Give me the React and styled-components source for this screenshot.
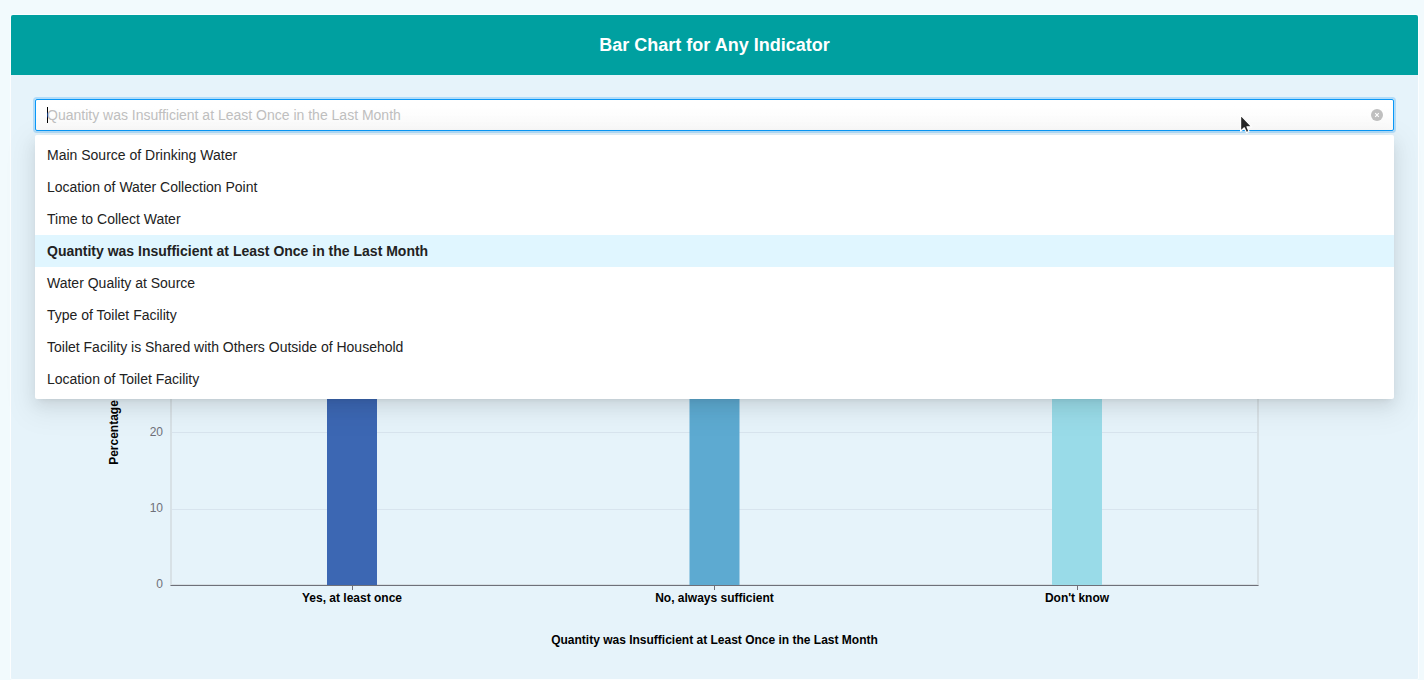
import React from 'react';
import styled, { createGlobalStyle } from 'styled-components';

const GlobalStyle = createGlobalStyle`
  * { box-sizing: border-box; }
  html, body { margin: 0; height: 100%; overflow: hidden; }
  body {
    background: #f2fafd;
    font-family: "Liberation Sans", Arial, sans-serif;
    font-size: 14px;
    color: #222;
  }
`;

const Page = styled.main`
  height: 680px;
  padding: 14px 5px 0 10px;
  overflow: hidden;
`;

const Card = styled.section`
  height: 666px;
  border: 1px solid #fcfeff;
  border-radius: 2px;
  background: #e6f3fa;
`;

const CardHeader = styled.header`
  display: flex;
  align-items: center;
  justify-content: center;
  height: 60px;
  border-radius: 2px 2px 0 0;
  background: #00a0a0;
`;

const Title = styled.h1`
  margin: 0;
  font-size: 18px;
  line-height: 28px;
  font-weight: 700;
  color: #fff;
`;

const CardBody = styled.div`
  padding: 24px;
`;

const SelectWrap = styled.div`
  position: relative;
`;

const SelectBox = styled.div`
  display: flex;
  align-items: center;
  height: 32px;
  padding: 0 10px 0 11px;
  border: 1px solid #0a98f7;
  border-radius: 2px;
  background: linear-gradient(#fff 20%, #fafafa);
  box-shadow: 0 0 0 2px rgba(10, 145, 245, 0.24);
`;

const Caret = styled.span`
  width: 1px;
  height: 16px;
  margin-right: -1px;
  background: #000;
`;

const Placeholder = styled.span`
  flex: 1;
  line-height: 30px;
  color: #bfbfbf;
`;

const ClearIcon = styled.svg`
  display: block;
  width: 12px;
  height: 12px;
`;

const Menu = styled.ul`
  position: absolute;
  z-index: 2;
  top: 36px;
  left: 0;
  right: 0;
  margin: 0;
  padding: 4px 0;
  list-style: none;
  border-radius: 2px;
  background: #fff;
  box-shadow: 0 3px 6px -4px rgba(0, 0, 0, 0.12),
    0 6px 16px 0 rgba(0, 0, 0, 0.08),
    0 9px 28px 8px rgba(0, 0, 0, 0.05);
`;

const Option = styled.li`
  height: 32px;
  padding: 5px 12px;
  line-height: 22px;
  font-weight: ${(p) => (p.$selected ? 700 : 400)};
  background: ${(p) => (p.$selected ? '#e0f6ff' : 'transparent')};
`;

const Pointer = styled.svg`
  position: absolute;
  z-index: 3;
  top: 15px;
  left: 1203px;
  width: 16px;
  height: 22px;
`;

const Chart = styled.svg`
  display: block;
  width: 1359px;
  height: 549px;
  font-family: "Liberation Sans", Arial, sans-serif;
  font-size: 12px;
`;

const AxisLabel = styled.text`
  font-weight: 700;
  text-anchor: middle;
  fill: #000;
`;

const TickLabel = styled.text`
  text-anchor: end;
  fill: #6e7079;
`;

const options = [
  'Main Source of Drinking Water',
  'Location of Water Collection Point',
  'Time to Collect Water',
  'Quantity was Insufficient at Least Once in the Last Month',
  'Water Quality at Source',
  'Type of Toilet Facility',
  'Toilet Facility is Shared with Others Outside of Household',
  'Location of Toilet Facility',
];
const selected = options[3];

const bars = [
  { label: 'Yes, at least once', x: 292, fill: '#3c67b3', value: 34 },
  { label: 'No, always sufficient', x: 654.5, fill: '#5daad1', value: 38 },
  { label: "Don't know", x: 1017, fill: '#99dbe8', value: 28 },
];
const BASE = 454;
const STEP = 76.3;

function BarChart() {
  return (
    <Chart viewBox="0 0 1359 549">
      {[10, 20, 30, 40].map((v) => {
        const y = Math.round(BASE - (v / 10) * STEP) + 0.5;
        return <path key={v} d={`M137 ${y}H1222`} stroke="#d8e4ee" />;
      })}
      <path d="M136 70V455M1223 70V455" stroke="#d6dfe4" strokeWidth="1.8" />
      <path d="M137 453.5H1222" stroke="#d6dfe4" />
      {bars.map((b) => {
        const height = (b.value / 10) * STEP;
        return <rect key={b.label} x={b.x} y={BASE - height} width="50" height={height} fill={b.fill} />;
      })}
      <path d="M135.5 454.5H1223.5" stroke="#6e7079" />
      {bars.map((b) => (
        <g key={b.label}>
          <path d={`M${Math.floor(b.x + 25) + 0.5} 455V459`} stroke="#6e7079" />
          <AxisLabel x={b.x + 25} y="471">{b.label}</AxisLabel>
        </g>
      ))}
      {[0, 10, 20].map((v) => (
        <TickLabel key={v} x="128" y={Math.ceil(BASE + 3 - (v / 10) * STEP)}>{v}</TickLabel>
      ))}
      <AxisLabel transform="translate(83 301.5) rotate(-90)">Percentage</AxisLabel>
      <AxisLabel x="679.5" y="513">{selected}</AxisLabel>
    </Chart>
  );
}

export default function App() {
  return (
    <Page>
      <GlobalStyle />
      <Card>
        <CardHeader>
          <Title>Bar Chart for Any Indicator</Title>
        </CardHeader>
        <CardBody>
          <SelectWrap>
            <SelectBox>
              <Caret />
              <Placeholder>{selected}</Placeholder>
              <ClearIcon viewBox="0 0 12 12">
                <circle cx="6" cy="6" r="6" fill="#bfbfbf" />
                <path d="M4.2 4.2L7.8 7.8M7.8 4.2L4.2 7.8" stroke="#fff" strokeWidth="1.1" />
              </ClearIcon>
            </SelectBox>
            <Menu>
              {options.map((o) => (
                <Option key={o} $selected={o === selected}>{o}</Option>
              ))}
            </Menu>
            <Pointer viewBox="0 0 16 22">
              <path
                d="M2.6 1V17.2L6.3 13.8L8.4 18.6L11 17.4L9 12.8H13.8Z"
                fill="#262626"
                stroke="#fff"
                strokeWidth="1.2"
                strokeLinejoin="round"
              />
            </Pointer>
          </SelectWrap>
          <BarChart />
        </CardBody>
      </Card>
    </Page>
  );
}
